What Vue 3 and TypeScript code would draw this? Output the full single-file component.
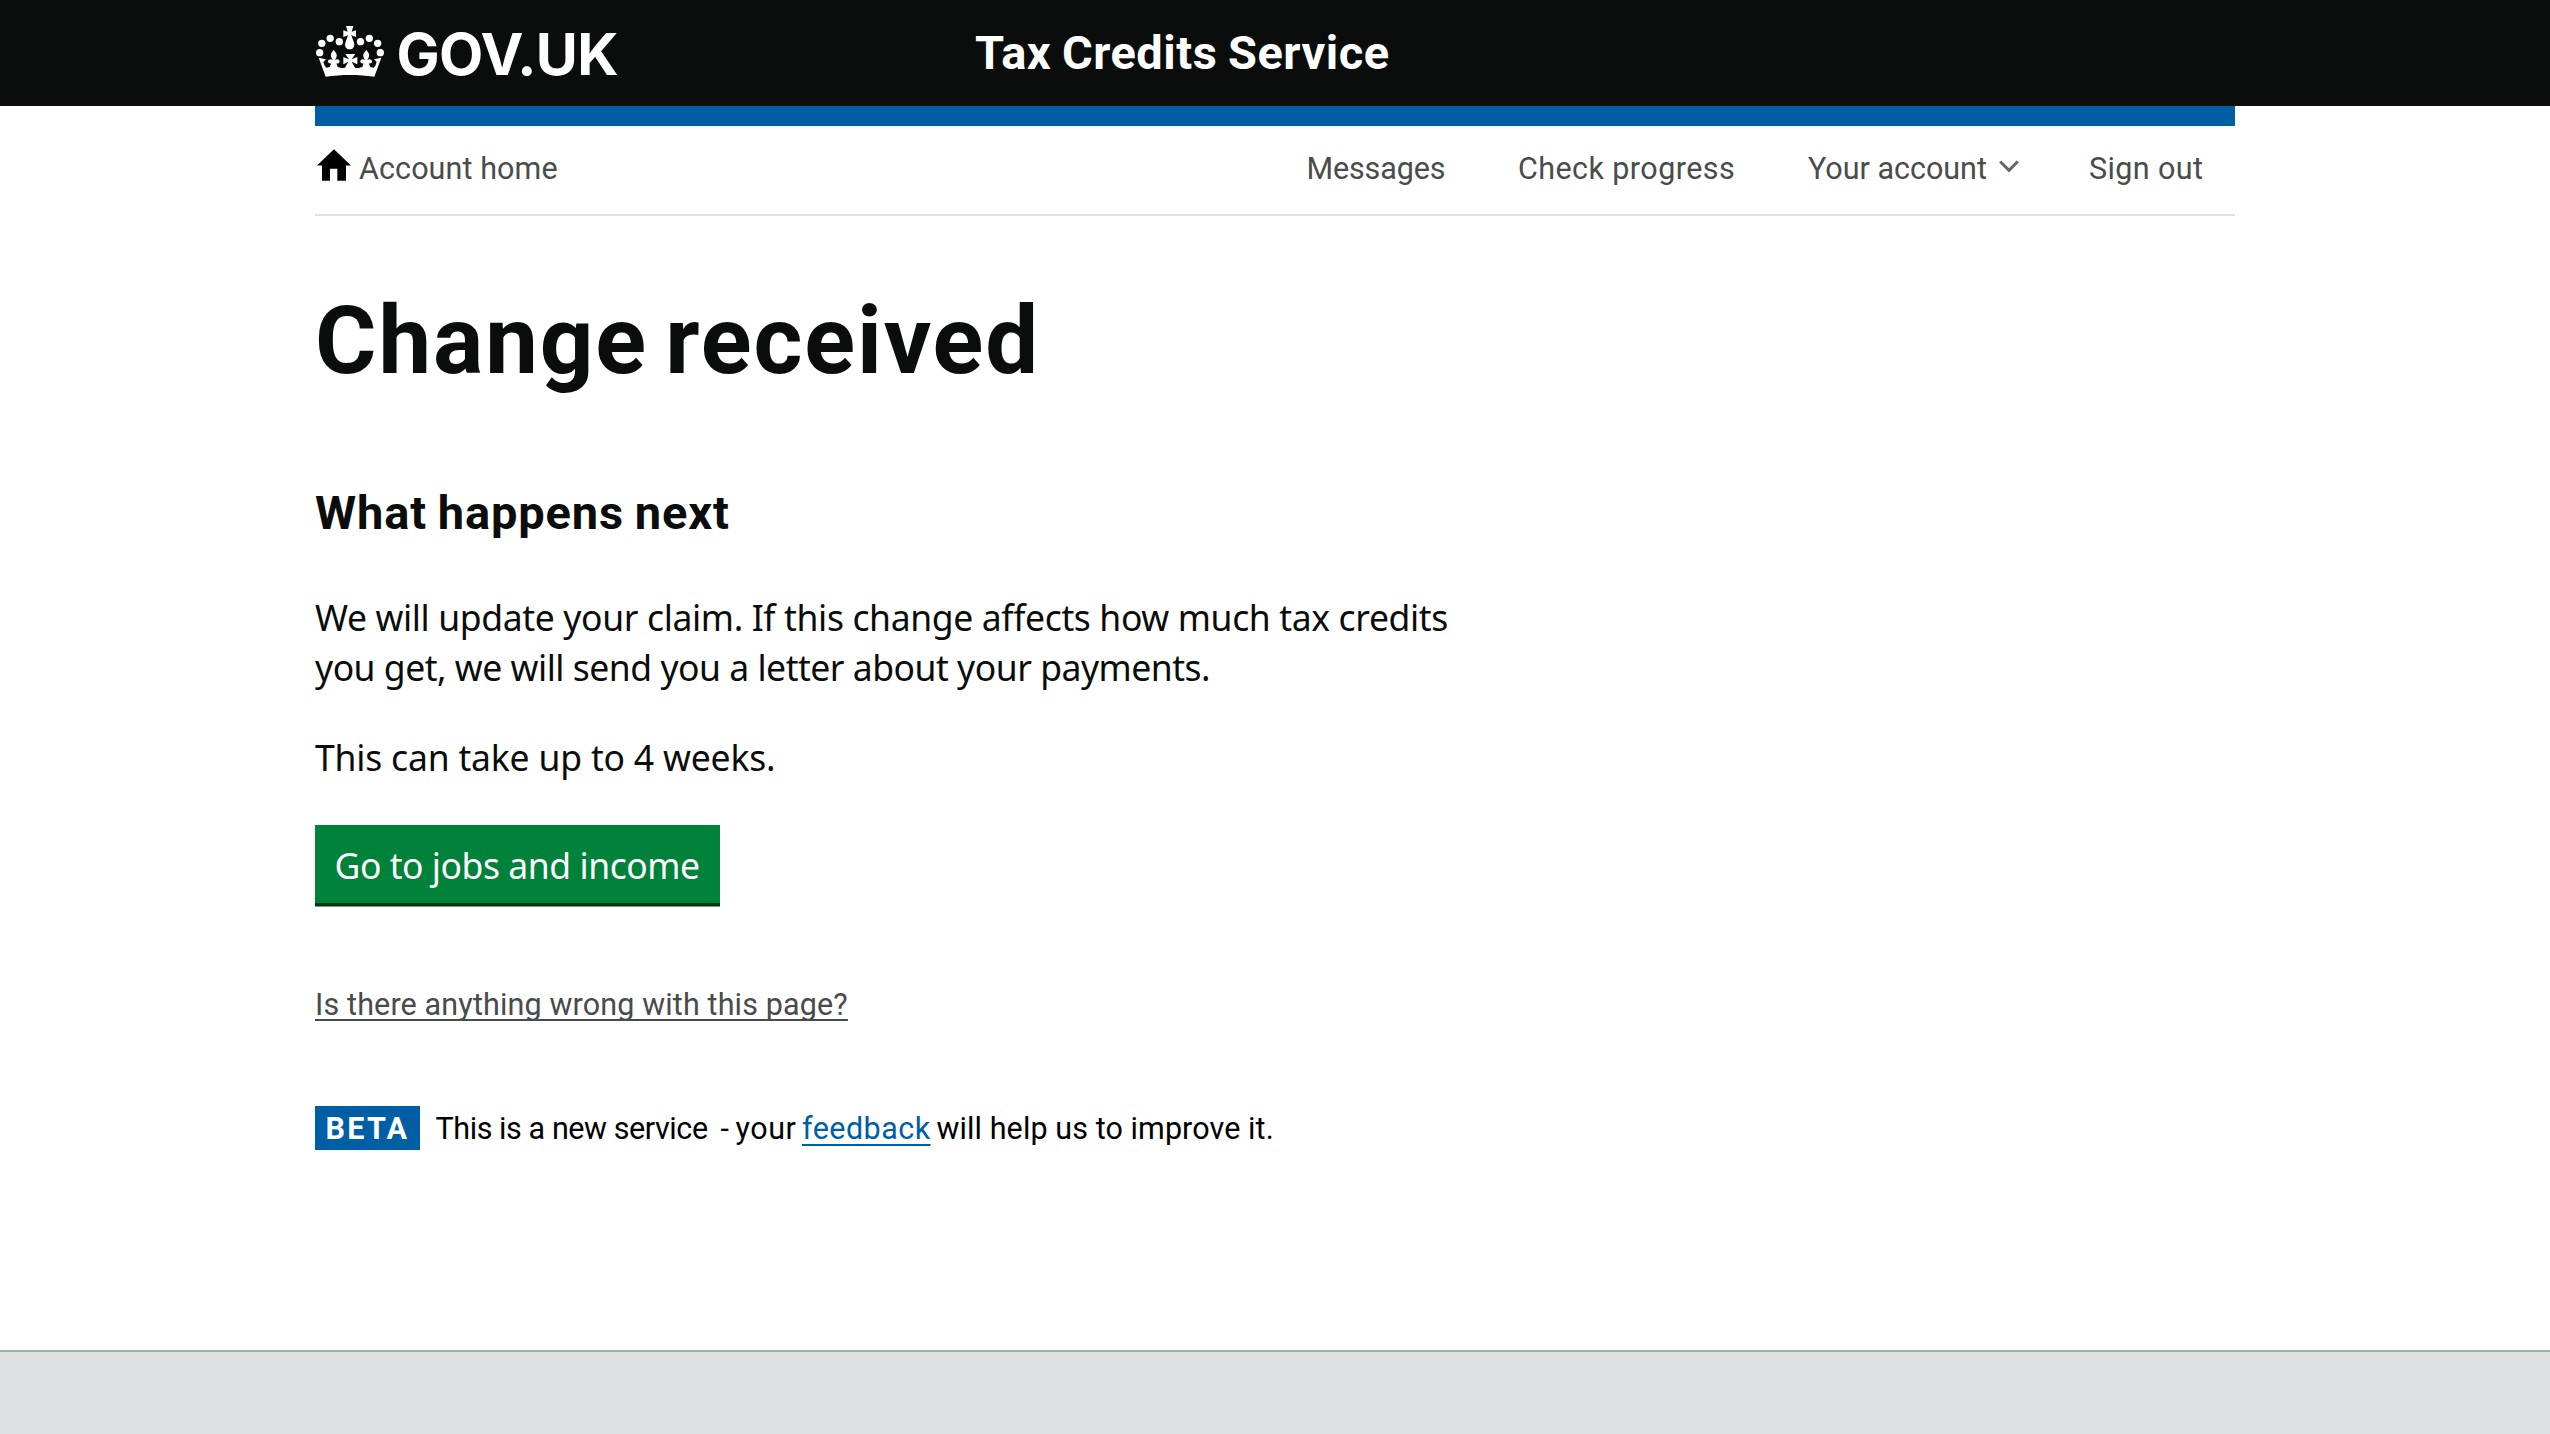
<script setup lang="ts">
interface NavItem {
  label: string
  key: string
  menu?: boolean
}

const navItems: NavItem[] = [
  { label: 'Messages', key: 'messages' },
  { label: 'Check progress', key: 'progress' },
  { label: 'Your account', key: 'account', menu: true },
  { label: 'Sign out', key: 'signout' },
]
</script>

<template>
  <div class="page">
    <header class="header">
      <div class="container header-inner">
        <a class="brand">
          <svg class="crown" viewBox="45 72 210 165" fill="#fff">
            <circle cx="59" cy="158" r="11" />
            <circle cx="65.500" cy="130" r="11" />
            <circle cx="90.500" cy="115" r="11" />
            <circle cx="118" cy="125" r="11" />
            <circle cx="181.500" cy="125" r="11" />
            <circle cx="208" cy="115" r="11" />
            <circle cx="233" cy="130" r="11" />
            <circle cx="241" cy="158" r="11" />
            <path d="M138 78h22l-5 17 13-4v20l-14-5 8 22c3 11-3 20-13 20s-16-9-13-20l8-22-14 5V91l13 4z" />
            <path d="M56 173l22 5-8 8 4 11 10 11c42-4 91-4 132 0l10-11 4-11-8-8 22-5-21 57c-48-7-98-7-146 0z" />
            <path d="M101 149c-6 8-10 14-8 20 1 5 4 8 5 12-4-5-13-4-14 3 0 6 6 8 10 6l-5 11-9 2v7h42v-7l-9-2-4-11c4 2 10 0 10-6-1-7-10-8-14-3 1-4 4-7 5-12 2-6-3-12-9-20z" />
            <path d="M199 149c-6 8-11 14-9 20 1 5 4 8 5 12-4-5-13-4-14 3 0 6 6 8 10 6l-4 11-9 2v7h42v-7l-9-2-5-11c4 2 10 0 10-6-1-7-10-8-14-3 1-4 4-7 5-12 2-6-2-12-8-20z" />
            <path d="M136 162h30l-11 16 17-7v22l-17-8 10 18 12 2v6h-54v-6l12-2 10-18-15 8v-22l17 7z" />
          </svg>
          <span class="brand-name">GOV.UK</span>
        </a>
        <span class="service-name">Tax Credits Service</span>
      </div>
    </header>

    <div class="container body">
      <div class="blue-bar"></div>
      <nav class="nav">
        <a class="home">
          <svg class="home-icon" viewBox="51 88 102 95">
            <path d="M102 88l51 49h-15v46h-26v-36H90v36H66v-46H51z" fill="#000" />
          </svg>
          <span>Account home</span>
        </a>
        <div class="nav-links">
          <a v-for="item in navItems" :key="item.key" class="nav-link" :class="item.key">
            <span>{{ item.label }}</span>
            <svg v-if="item.menu" class="chevron" viewBox="0 0 20 13">
              <path d="M1.200 1.500L10 10.300l8.800-8.800" fill="none" stroke="#666" stroke-width="3" />
            </svg>
          </a>
        </div>
      </nav>

      <main>
        <h1>Change received</h1>
        <h2>What happens next</h2>
        <p class="copy">
          We will update your claim. If this change affects how much tax credits<br />
          <span class="second">you get, we will send you a letter about your payments.</span>
        </p>
        <p class="copy short">This can take up to 4 weeks.</p>
        <a class="button">Go to jobs and income</a>
        <a class="report">Is there anything wrong with this page?</a>
        <div class="phase">
          <strong class="tag">BETA</strong>
          <span class="intro">This is a new service</span>
          <span class="dash">-</span>
          <span class="your">your</span>
          <a class="feedback">feedback</a>
          <span class="outro">will help us to improve it.</span>
        </div>
      </main>
    </div>

    <footer class="footer"></footer>
  </div>
</template>

<style>
body {
  margin: 0;
  background: #fff;
}
</style>

<style scoped>
.page {
  display: flex;
  flex-direction: column;
  height: 1434px;
  overflow: hidden;
  font-family: Roboto, "Noto Sans", sans-serif;
  color: #0b0c0c;
  white-space: nowrap;
}
.container {
  width: 1920px;
  margin: 0 auto;
}
.header {
  height: 106px;
  background: #0b0c0c;
  color: #fff;
}
.header-inner {
  display: flex;
  align-items: flex-start;
}
.brand {
  display: flex;
  width: 660px;
}
.crown {
  width: 70px;
  height: 55px;
  margin: 24px 11.500px 0 0;
}
.brand-name {
  font: 700 57.500px/108px Inter, sans-serif;
  letter-spacing: -0.600px;
}
.service-name {
  font-size: 47px;
  font-weight: 700;
  line-height: 106px;
  letter-spacing: 0.500px;
  word-spacing: -1.500px;
}
.body {
  flex: 1;
}
.blue-bar {
  height: 20px;
  background: #005ea5;
}
.nav {
  display: flex;
  justify-content: space-between;
  height: 88px;
  border-bottom: 2px solid #dee0e2;
  font-size: 30.500px;
  line-height: 85px;
  color: #4a4c4c;
}
.home {
  display: flex;
  letter-spacing: 0.100px;
}
.home-icon {
  width: 34px;
  height: 32px;
  margin: 23px 8px 0 2px;
}
.nav-links {
  display: flex;
  padding-right: 31.700px;
}
.nav-link {
  display: flex;
}
.messages {
  letter-spacing: -0.100px;
  margin-right: 72.400px;
}
.progress {
  letter-spacing: 0.430px;
  margin-right: 72.800px;
}
.account {
  margin-right: 70px;
}
.signout {
  letter-spacing: 0.390px;
}
.chevron {
  width: 20px;
  height: 13px;
  margin: 34px 0 0 12px;
}
h1 {
  margin: 75px 0 0;
  font-size: 94px;
  line-height: 100px;
  letter-spacing: 1.900px;
  word-spacing: -8px;
}
h2 {
  margin: 92px 0 11px;
  font-size: 47px;
  line-height: 60px;
  letter-spacing: 0.850px;
  word-spacing: -1.700px;
}
.copy {
  margin: 40px 0 0;
  font-family: "Noto Sans", sans-serif;
  font-size: 35.500px;
  line-height: 50px;
  letter-spacing: -0.360px;
}
h2 + .copy {
  margin-top: 49px;
}
.second {
  letter-spacing: -0.480px;
}
.short {
  letter-spacing: -0.190px;
}
.button {
  display: block;
  box-sizing: border-box;
  width: 405px;
  height: 81px;
  margin-top: 43px;
  padding: 8px 0 0 19.500px;
  border-bottom: 3px solid #003618;
  box-shadow: 0 1px #80988a;
  background: #00823b;
  color: #fff;
  font-family: "Noto Sans", sans-serif;
  font-size: 35.500px;
  line-height: 64px;
  letter-spacing: -0.450px;
}
.report {
  display: block;
  width: max-content;
  margin-top: 79px;
  font-size: 30.500px;
  line-height: 40px;
  letter-spacing: 0.140px;
  color: #484b4c;
  text-decoration: underline 2px;
  text-underline-offset: 4px;
  text-decoration-skip-ink: none;
}
.phase {
  display: flex;
  height: 44px;
  margin-top: 81px;
  font-size: 30.500px;
  line-height: 45px;
  color: #000;
}
.tag {
  box-sizing: border-box;
  width: 105px;
  padding-left: 10.500px;
  background: #005ea5;
  color: #fff;
  letter-spacing: 2.260px;
}
.intro {
  width: 285px;
  margin-left: 15.500px;
  letter-spacing: -0.420px;
}
.dash {
  width: 15px;
}
.your {
  width: 66.500px;
  letter-spacing: 0.530px;
}
.feedback {
  margin-right: 6px;
  letter-spacing: 0.450px;
  color: #005ea5;
  text-decoration: underline 2px;
  text-underline-offset: 5px;
  text-decoration-skip-ink: none;
}
.outro {
  letter-spacing: 0.090px;
}
.footer {
  box-sizing: border-box;
  height: 84px;
  border-top: 2px solid #a1acb2;
  background: #dee0e2;
}
</style>
